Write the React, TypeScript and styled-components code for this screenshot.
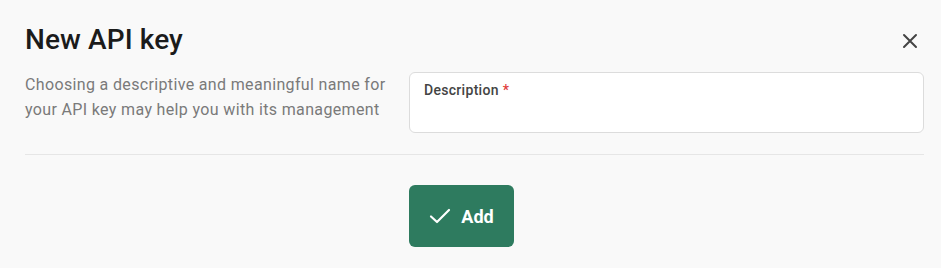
import React from 'react';
import styled, { createGlobalStyle } from "styled-components";

const GlobalStyle=createGlobalStyle`
	html, body {
		margin:0;
		padding:0;
		background:#f9f9f9;
		font-family:Roboto, "Liberation Sans", sans-serif;
	}
`;

const Panel=styled.div`
	width:941px;
	height:268px;
	box-sizing:border-box;
	padding:22px 17px 0 25px;
	background:#f9f9f9;
`;

const HeaderRow=styled.div`
	display:flex;
	justify-content:space-between;
	align-items:center;
	height:34px;
`;

const Title=styled.h2`
	margin:0;
	font-size:28px;
	font-weight:500;
	color:#1b1b1b;
	letter-spacing:0.1px;
`;

const CloseButton=styled.button`
	border:none;
	background:none;
	padding:0;
	width:20px;
	height:20px;
	margin-right:4px;
	margin-top:4px;
	display:flex;
	align-items:center;
	justify-content:center;
	cursor:pointer;
`;

const BodyRow=styled.div`
	display:grid;
	grid-template-columns:384px 1fr;
	margin-top:16px;
`;

const Hint=styled.p`
	margin:0;
	font-size:16px;
	line-height:25px;
	color:#7a7a7a;
	letter-spacing:0.35px;
`;

const Field=styled.label`
	display:block;
	height:61px;
	box-sizing:border-box;
	background:#fff;
	border:1px solid #dcdcdc;
	border-radius:6px;
	padding:7px 14px;
`;

const FieldLabel=styled.span`
	font-size:14px;
	font-weight:500;
	color:#444;
	letter-spacing:0.3px;
`;

const Required=styled.span`
	color:#e03b3b;
	margin-left:4px;
`;

const Divider=styled.hr`
	border:none;
	border-top:1px solid #e6e6e6;
	margin:21px 0 30px;
`;

const Footer=styled.div`
	display:grid;
	grid-template-columns:384px 1fr;
`;

const AddButton=styled.button`
	grid-column:2;
	width:105px;
	height:62px;
	border:none;
	border-radius:6px;
	background:#2e7b5f;
	color:#fff;
	font-family:inherit;
	font-size:18px;
	font-weight:700;
	display:flex;
	align-items:center;
	justify-content:center;
	gap:10px;
	padding-right:6px;
	cursor:pointer;
`;

const App:React.FC=()=>{
	return(
		<>
			<GlobalStyle/>
			<Panel>
				<HeaderRow>
					<Title>New API key</Title>
					<CloseButton aria-label="Close">
						<svg width="16" height="16" viewBox="0 0 16 16">
							<path d="M2 2 L14 14 M14 2 L2 14" stroke="#444" strokeWidth="2" strokeLinecap="round"/>
						</svg>
					</CloseButton>
				</HeaderRow>
				<BodyRow>
					<Hint>Choosing a descriptive and meaningful name for your API key may help you with its management</Hint>
					<Field>
						<FieldLabel>Description<Required>*</Required></FieldLabel>
					</Field>
				</BodyRow>
				<Divider/>
				<Footer>
					<AddButton>
						<svg width="22" height="18" viewBox="0 0 22 18">
							<path d="M2 9.5 L8 15 L20 3" stroke="#fff" strokeWidth="2.2" fill="none" strokeLinecap="round" strokeLinejoin="round"/>
						</svg>
						Add
					</AddButton>
				</Footer>
			</Panel>
		</>
	);
}

export default App;
